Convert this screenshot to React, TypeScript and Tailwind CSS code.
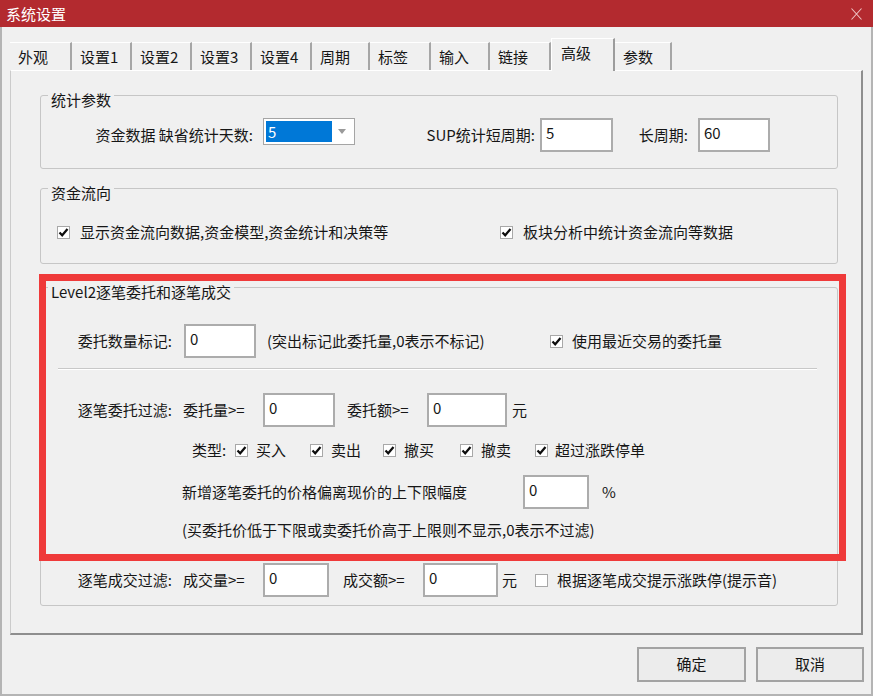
import React from 'react';

const tabs = [
  { label: '外观', w: 'w-[62px]' },
  { label: '设置1', w: 'w-[60px]' },
  { label: '设置2', w: 'w-[60px]' },
  { label: '设置3', w: 'w-[60px]' },
  { label: '设置4', w: 'w-[60px]' },
  { label: '周期', w: 'w-[58px]' },
  { label: '标签', w: 'w-[61px]' },
  { label: '输入', w: 'w-[59px]' },
  { label: '链接', w: 'w-[61px]' },
  { label: '高级', w: 'w-[64px]', active: true },
  { label: '参数', w: 'w-[57px]' },
];

function Check({ on = true }: { on?: boolean }) {
  return (
    <span className="w-[13px] h-[13px] shrink-0 border border-[#a8a8a8] bg-white flex items-center justify-center">
      {on && (
        <svg width="11" height="11" viewBox="0 0 11 11">
          <path d="M1.5 5.5 L4.2 8.3 L9.5 2" fill="none" stroke="#0d0d0d" strokeWidth="2.2" />
        </svg>
      )}
    </span>
  );
}

function Field({ value, className }: { value: string; className: string }) {
  return (
    <div className={`h-[34px] shrink-0 border-2 border-[#acacac] bg-white pl-[4px] pt-[2px] leading-[22px] ${className}`}>
      {value}
    </div>
  );
}

function Group({ title, className, children }: { title: string; className: string; children: React.ReactNode }) {
  return (
    <div className={`relative ml-[29px] w-[798px] border border-[#c6c6c6] rounded-[3px] ${className}`}>
      <span className="absolute -top-[6px] left-[7px] px-[3px] leading-[20px] bg-[#f0f0f0]">{title}</span>
      {children}
    </div>
  );
}

export default function App() {
  return (
    <div className="relative w-[873px] h-[696px] overflow-hidden bg-[#f0f0f0] text-[15px] text-[#161616] font-['Noto_Sans_CJK_SC',sans-serif]">
      {/* title bar */}
      <div className="h-[27px] bg-[#b32a2f] flex items-center justify-between pl-[6px] pr-[11px]">
        <span className="text-white text-[15px] leading-[27px]">系统设置</span>
        <svg width="11" height="12" viewBox="0 0 11 12">
          <path d="M0.5 0.5 L10.5 11.5 M10.5 0.5 L0.5 11.5" stroke="#eec3c4" strokeWidth="1.1" />
        </svg>
      </div>

      <div className="h-[669px] border-x-2 border-b-2 border-[#b4b4b4]">
        {/* tabs */}
        <div className="pt-[11px] pl-[8px] h-[43px] flex items-end">
          {tabs.map(t =>
            t.active ? (
              <div key={t.label} className={`${t.w} relative z-10 -mb-[1px] h-[33px] border-t border-l border-white border-r-2 border-r-[#9c9c9c] bg-[#f0f0f0] pl-[9px] pt-[3px] leading-[22px]`}>
                {t.label}
              </div>
            ) : (
              <div key={t.label} className={`${t.w} h-[28px] border-t border-white border-r-2 border-r-[#a6a6a6] pl-[8px] pt-[3px] leading-[22px]`}>
                {t.label}
              </div>
            )
          )}
        </div>

        {/* tab page */}
        <div className="ml-[8px] w-[853px] h-[565px] border-t border-t-white border-l border-l-[#cbcbcb] border-r-2 border-r-[#8e8e8e] border-b-2 border-b-[#8e8e8e]">
          <Group title="统计参数" className="mt-[24px] h-[74px]">
            <div className="mt-[22px] flex items-start h-[34px]">
              <span className="w-[212px] text-right leading-[33px]">资金数据 缺省统计天数:</span>
              <div className="ml-[10px] w-[92px] h-[27px] border border-[#a5a5a5] bg-white flex p-[2px]">
                <div className="w-[66px] h-full bg-[#0078d7] text-white pl-[2px] leading-[21px]">5</div>
                <div className="flex-1 flex items-center justify-center">
                  <svg width="8" height="5" viewBox="0 0 8 5">
                    <path d="M0 0 L8 0 L4 5 Z" fill="#9a9a9a" />
                  </svg>
                </div>
              </div>
              <span className="w-[180px] text-right leading-[33px]">SUP统计短周期:</span>
              <Field value="5" className="ml-[5px] w-[73px]" />
              <span className="w-[75px] text-right leading-[33px]">长周期:</span>
              <Field value="60" className="ml-[10px] w-[72px]" />
            </div>
          </Group>

          <Group title="资金流向" className="mt-[19px] h-[76px]">
            <div className="mt-[33px] h-[20px] flex items-center">
              <div className="ml-[16px] w-[443px] flex items-center">
                <Check />
                <span className="ml-[10px]">显示资金流向数据,资金模型,资金统计和决策等</span>
              </div>
              <Check />
              <span className="ml-[10px]">板块分析中统计资金流向等数据</span>
            </div>
          </Group>

          <Group title="Level2逐笔委托和逐笔成交" className="mt-[23px] h-[319px]">
            <div className="mt-[36px] h-[34px] flex items-center">
              <span className="w-[131px] text-right">委托数量标记:</span>
              <Field value="0" className="ml-[12px] w-[72px]" />
              <span className="ml-[11px] w-[283px]">(突出标记此委托量,0表示不标记)</span>
              <Check />
              <span className="ml-[9px]">使用最近交易的委托量</span>
            </div>

            <div className="mt-[10px] ml-[17px] w-[759px] border-t border-[#c8c8c8] border-b border-b-white" />

            <div className="mt-[23px] h-[34px] flex items-center">
              <span className="w-[131px] text-right">逐笔委托过滤:</span>
              <span className="ml-[11px] w-[80px]">委托量&gt;=</span>
              <Field value="0" className="w-[72px]" />
              <span className="ml-[12px] w-[80px]">委托额&gt;=</span>
              <Field value="0" className="w-[80px]" />
              <span className="ml-[5px]">元</span>
            </div>

            <div className="mt-[13px] h-[20px] flex items-center">
              <span className="ml-[151px] w-[43px]">类型:</span>
              <div className="w-[75px] flex items-center"><Check /><span className="ml-[8px]">买入</span></div>
              <div className="w-[73px] flex items-center"><Check /><span className="ml-[8px]">卖出</span></div>
              <div className="w-[77px] flex items-center"><Check /><span className="ml-[8px]">撤买</span></div>
              <div className="w-[75px] flex items-center"><Check /><span className="ml-[8px]">撤卖</span></div>
              <div className="flex items-center"><Check /><span className="ml-[7px]">超过涨跌停单</span></div>
            </div>

            <div className="mt-[15px] h-[34px] flex items-center">
              <span className="ml-[141px] w-[341px]">新增逐笔委托的价格偏离现价的上下限幅度</span>
              <Field value="0" className="w-[66px]" />
              <span className="ml-[13px]">%</span>
            </div>

            <div className="mt-[11px] h-[20px] flex items-center">
              <span className="ml-[141px]">(买委托价低于下限或卖委托价高于上限则不显示,0表示不过滤)</span>
            </div>

            <div className="mt-[23px] h-[34px] flex items-center">
              <span className="w-[131px] text-right">逐笔成交过滤:</span>
              <span className="ml-[11px] w-[80px]">成交量&gt;=</span>
              <Field value="0" className="w-[66px]" />
              <span className="ml-[14px] w-[80px]">成交额&gt;=</span>
              <Field value="0" className="w-[75px]" />
              <span className="ml-[4px] w-[33px]">元</span>
              <Check on={false} />
              <span className="ml-[9px]">根据逐笔成交提示涨跌停(提示音)</span>
            </div>
          </Group>
        </div>

        {/* buttons */}
        <div className="mt-[12px] flex justify-end gap-[10px] pr-[7px]">
          <button className="w-[109px] h-[35px] border-2 border-[#a3a3a3] bg-[#ececec] text-[15px]">确定</button>
          <button className="w-[108px] h-[35px] border-2 border-[#a3a3a3] bg-[#ececec] text-[15px]">取消</button>
        </div>
      </div>

      {/* red highlight */}
      <div className="pointer-events-none absolute left-[39px] top-[274px] w-[807px] h-[287px] border-[7px] border-[#ef3a3a]" />
    </div>
  );
}
